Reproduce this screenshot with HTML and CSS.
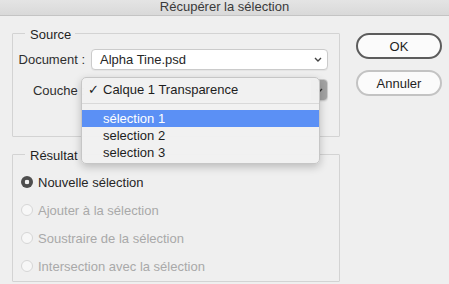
FILE: index.html
```html
<!DOCTYPE html>
<html lang="fr">
<head>
    <meta charset="UTF-8">
    <meta name="viewport" content="width=device-width, initial-scale=1.0">
    <title>Récupérer la sélection</title>
    <link rel="stylesheet" href="styles.css">
</head>
<body>

    <div class="window">
        <div class="titlebar">Récupérer la sélection</div>

        <div class="content">
            <div class="main">
                <fieldset class="group source">
                    <legend>Source</legend>
                    <div class="row">
                        <label class="row-label">Document :</label>
                        <div class="select">
                            <span class="select-text">Alpha Tine.psd</span>
                            <svg class="chevron" width="8" height="5" viewBox="0 0 8 5"><path d="M1 1l3 3 3-3" fill="none" stroke="#444" stroke-width="1.4"/></svg>
                        </div>
                    </div>
                    <div class="row">
                        <label class="row-label">Couche :</label>
                        <div class="select popup">
                            <span class="select-text"></span>
                            <span class="stepper">
                                <svg width="8" height="5" viewBox="0 0 8 5"><path d="M1 1l3 3 3-3" fill="none" stroke="#333" stroke-width="1.4"/></svg>
                            </span>
                        </div>
                    </div>
                </fieldset>

                <fieldset class="group result">
                    <legend>Résultat</legend>
                    <div class="radio-row">
                        <span class="radio checked"></span>
                        <span>Nouvelle sélection</span>
                    </div>
                    <div class="radio-row disabled">
                        <span class="radio"></span>
                        <span>Ajouter à la sélection</span>
                    </div>
                    <div class="radio-row disabled">
                        <span class="radio"></span>
                        <span>Soustraire de la sélection</span>
                    </div>
                    <div class="radio-row disabled">
                        <span class="radio"></span>
                        <span>Intersection avec la sélection</span>
                    </div>
                </fieldset>
            </div>

            <div class="actions">
                <button class="button default">OK</button>
                <button class="button">Annuler</button>
            </div>
        </div>

        <!-- Menu déroulant ouvert -->
        <div class="menu">
            <div class="menu-item"><span class="check">✓</span>Calque 1 Transparence</div>
            <div class="menu-separator"></div>
            <div class="menu-item active"><span class="check"></span>sélection 1</div>
            <div class="menu-item"><span class="check"></span>selection 2</div>
            <div class="menu-item"><span class="check"></span>selection 3</div>
        </div>
    </div>

</body>
</html>
```

FILE: styles.css
```css
body {
    margin: 0;
    font-family: 'Liberation Sans', Arial, sans-serif;
    font-size: 13px;
    color: #262626;
    background-color: #efefef;
}

.window {
    position: relative;
    width: 449px;
    height: 284px;
    overflow: hidden;
    background-color: #efefef;
}

.titlebar {
    height: 15px;
    line-height: 13px;
    text-align: center;
    color: #3a3a3a;
    background: linear-gradient(#e4e4e4, #d9d9d9);
    border-bottom: 1px solid #c4c4c4;
}

.content {
    display: flex;
    gap: 16px;
    padding: 7px 7px 0 12px;
}

.main {
    width: 328px;
}

.group {
    margin: 0;
    padding: 0;
    border: 1px solid #d3d3d3;
    border-radius: 1px;
}

.group legend {
    margin-left: 12px;
    padding: 4px 4px 0 5px;
    line-height: 16px;
    color: #1f1f1f;
}

.source {
    padding: 6px 0 35px 0;
}

.result {
    margin-top: 7px;
    padding: 4px 0 1px 0;
}

.row {
    display: flex;
    align-items: center;
    margin-bottom: 9px;
}

.row:last-child {
    margin-bottom: 0;
}

.row-label {
    width: 72px;
    margin-right: 6px;
    text-align: right;
    color: #2e2e2e;
}

.select {
    display: flex;
    align-items: center;
    justify-content: space-between;
    box-sizing: border-box;
    width: 237px;
    height: 21px;
    padding-left: 8px;
    background-color: #fff;
    border: 1px solid #cbcbcb;
    border-radius: 4px;
    box-shadow: 0 1px 1px rgba(0, 0, 0, 0.05);
}

.chevron {
    margin-right: 5px;
}

.popup {
    height: 22px;
    overflow: hidden;
}

.stepper {
    display: flex;
    align-items: center;
    justify-content: center;
    width: 16px;
    height: 100%;
    background-color: #a3a3a3;
}

.radio-row {
    display: flex;
    align-items: center;
    gap: 5px;
    height: 28px;
    padding-left: 8px;
}

.radio-row.disabled {
    color: #a9a9a9;
}

.radio {
    box-sizing: border-box;
    width: 12px;
    height: 12px;
    border-radius: 50%;
    background-color: #f7f7f7;
    border: 1px solid #d6d6d6;
}

.radio.checked {
    border: none;
    background: radial-gradient(circle, #f4f4f4 0 2px, #4e4e4e 2.6px);
}

.actions {
    display: flex;
    flex-direction: column;
    gap: 11px;
    margin-top: 10px;
}

.button {
    box-sizing: border-box;
    width: 86px;
    height: 26px;
    font-family: 'Liberation Sans', Arial, sans-serif;
    font-size: 13px;
    color: #1f1f1f;
    background-color: #fbfbfb;
    border: 2px solid #c3c3c3;
    border-radius: 13px;
    padding: 0;
}

.button.default {
    border-color: #5c5c5c;
}

/* Menu déroulant */
.menu {
    position: absolute;
    left: 81px;
    top: 77px;
    box-sizing: border-box;
    width: 239px;
    height: 87px;
    padding: 3px 0;
    background-color: rgba(241, 241, 241, 0.98);
    border: 1px solid #c6c6c6;
    border-radius: 5px;
    box-shadow: 0 3px 9px rgba(0, 0, 0, 0.22);
}

.menu-item {
    height: 17px;
    line-height: 17px;
    padding-left: 6px;
    color: #1d1d1d;
}

.menu-item.active {
    background-color: #5b90f5;
    color: #fff;
}

.check {
    display: inline-block;
    width: 15px;
}

.menu-separator {
    height: 1px;
    margin: 5px 0 6px 0;
    background-color: #d9d9d9;
}
```
